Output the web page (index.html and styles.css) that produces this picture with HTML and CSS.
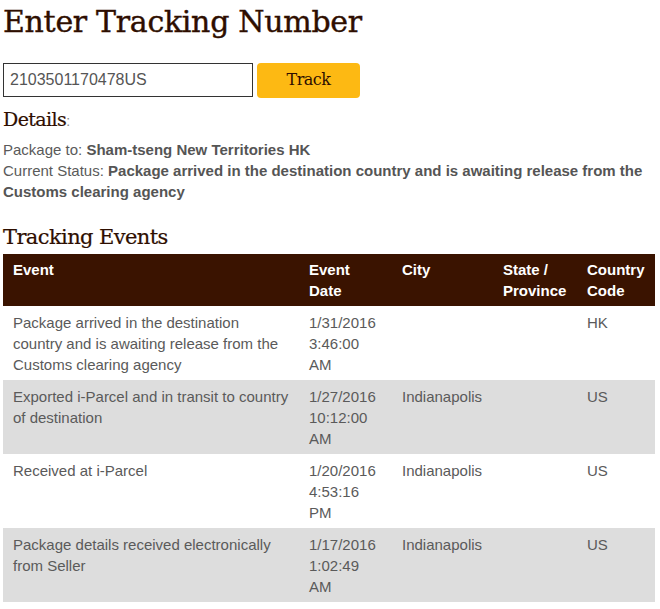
FILE: index.html
```html
<!DOCTYPE html>
<html>
<head>
<meta charset="utf-8">
<link rel="stylesheet" href="styles.css">
</head>
<body>
<div class="page">
  <h1 class="title">Enter Tracking Number</h1>
  <form class="track-form">
    <input class="track-input" type="text" value="2103501170478US">
    <button class="track-btn" type="button">Track</button>
  </form>
  <h2 class="details-title">Details<span class="colon">:</span></h2>
  <p class="info first">Package to: <b>Sham-tseng New Territories HK</b></p>
  <p class="info">Current Status: <b>Package arrived in the destination country and is awaiting release from the Customs clearing agency</b></p>
  <h2 class="events-title">Tracking Events</h2>
  <table class="events">
    <colgroup>
      <col class="c-event"><col class="c-date"><col class="c-city"><col class="c-state"><col class="c-country">
    </colgroup>
    <thead>
      <tr><th>Event</th><th>Event Date</th><th>City</th><th>State / Province</th><th>Country Code</th></tr>
    </thead>
    <tbody>
      <tr><td>Package arrived in the destination country and is awaiting release from the Customs clearing agency</td><td>1/31/2016 3:46:00 AM</td><td></td><td></td><td>HK</td></tr>
      <tr class="alt"><td>Exported i-Parcel and in transit to country of destination</td><td>1/27/2016 10:12:00 AM</td><td>Indianapolis</td><td></td><td>US</td></tr>
      <tr><td>Received at i-Parcel</td><td>1/20/2016 4:53:16 PM</td><td>Indianapolis</td><td></td><td>US</td></tr>
      <tr class="alt"><td>Package details received electronically from Seller</td><td>1/17/2016 1:02:49 AM</td><td>Indianapolis</td><td></td><td>US</td></tr>
    </tbody>
  </table>
</div>
</body>
</html>
```
FILE: styles.css
```css
html, body { margin: 0; padding: 0; background: #fff; }
.page {
  padding: 0 5px 0 3px;
  font-family: "Liberation Sans", Arial, sans-serif;
  font-size: 15px;
  line-height: 21px;
  color: #5a5a5a;
}
.title {
  font-family: "DejaVu Serif", serif;
  font-weight: normal;
  font-size: 30px;
  line-height: 40px;
  margin: 0;
  padding-top: 2px;
  color: #2e0e00;
  letter-spacing: -0.3px;
  -webkit-text-stroke: 0.4px #2e0e00;
}
.track-form {
  display: flex;
  gap: 4px;
  margin: 21px 0 0 0;
}
.track-input {
  box-sizing: border-box;
  width: 250px;
  height: 34px;
  margin: 0;
  border: 1px solid #333;
  padding: 0 6px;
  font-family: "Liberation Sans", Arial, sans-serif;
  font-size: 16px;
  color: #555;
  outline: none;
}
.track-btn {
  box-sizing: border-box;
  width: 103px;
  height: 35px;
  margin: 0;
  border: none;
  border-radius: 4px;
  background: #fdb913;
  font-family: "DejaVu Serif", serif;
  font-size: 16px;
  letter-spacing: -0.5px;
  color: #2e0e00;
  padding: 0 0 2px 0;
}
.details-title {
  font-family: "DejaVu Serif", serif;
  font-weight: normal;
  font-size: 19px;
  line-height: 24px;
  margin: 9px 0 0 0;
  color: #2e0e00;
  letter-spacing: -0.6px;
  -webkit-text-stroke: 0.2px #2e0e00;
}
.colon {
  font-family: "Liberation Sans", Arial, sans-serif;
  font-size: 14px;
  color: #888;
  letter-spacing: 0;
  -webkit-text-stroke: 0;
}
.info { margin: 0; }
.info.first { margin-top: 6px; }
.info b { color: #555; }
.events-title {
  font-family: "DejaVu Serif", serif;
  font-weight: normal;
  font-size: 21px;
  line-height: 26px;
  margin: 22px 0 0 0;
  color: #2e0e00;
  letter-spacing: -0.6px;
  -webkit-text-stroke: 0.2px #2e0e00;
}
.events {
  width: 652px;
  margin-top: 4px;
  border-collapse: collapse;
  table-layout: fixed;
}
.c-event { width: 296px; }
.c-date { width: 93px; }
.c-city { width: 101px; }
.c-state { width: 84px; }
.c-country { width: 78px; }
.events th {
  background: #3a1300;
  color: #fff;
  text-align: left;
  vertical-align: top;
  font-weight: bold;
  padding: 5px 10px;
}
.events td {
  vertical-align: top;
  padding: 6px 10px 5px 10px;
}
.events tr.alt td { background: #dddddd; }
```
